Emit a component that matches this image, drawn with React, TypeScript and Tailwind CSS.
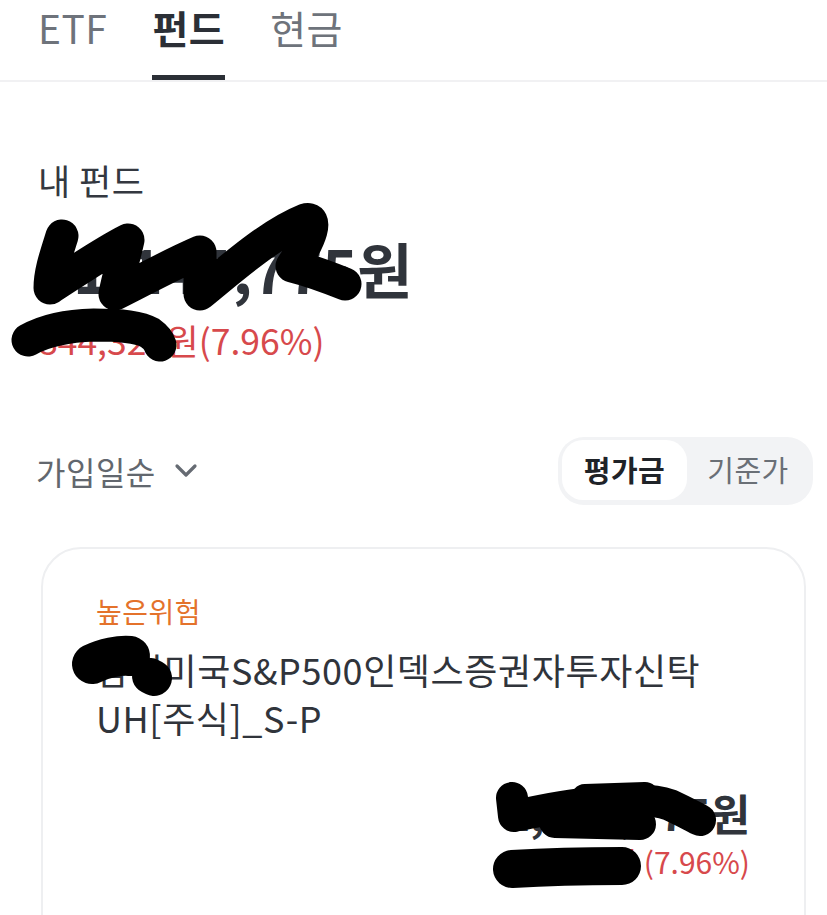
import React from "react";

const font = { fontFamily: '"Noto Sans CJK KR", "Noto Sans", sans-serif' };

function Scribbles() {
  return (
    <svg
      className="pointer-events-none absolute left-0 top-0"
      width={827}
      height={915}
      viewBox="0 0 827 915"
      fill="none"
      stroke="#000"
      strokeLinecap="round"
      strokeLinejoin="round"
    >
      <path
        d="M62 236 C56 255 50 272 50 288 C78 270 104 252 128 240 C124 258 118 278 115 294 C143 280 172 264 200 252 C200 268 200 282 200 294 C232 268 270 234 305 220 C318 216 312 238 292 266 C308 270 330 278 345 284"
        strokeWidth={33}
      />
      <path d="M28 340 C46 330 66 326 94 325 C122 325 140 327 150 333 C157 338 159 342 160 345" strokeWidth={33} />
      <path d="M92 664 C104 658 120 655 130 656" strokeWidth={40} />
      <path d="M150 676 L154 678" strokeWidth={36} />
      <path d="M512 798 L514 816 C545 810 572 804 600 802 C625 800 650 798 670 805 C685 812 694 817 700 820" strokeWidth={32} />
      <path d="M555 822 L640 824" strokeWidth={32} />
      <path d="M585 798 L645 796" strokeWidth={28} />
      <path d="M512 869 C545 867 585 866 622 866" strokeWidth={38} />
    </svg>
  );
}

export default function App() {
  return (
    <div className="relative h-[915px] w-full overflow-hidden bg-white" style={font}>
      {/* Tabs */}
      <div className="flex h-[82px] items-start gap-[45px] border-b-2 border-[#f1f1f3] pl-[38px]">
        <div className="flex h-[82px] flex-col">
          <span className="pt-[4px] text-[39px] leading-[46px] tracking-[0.5px] text-[#6e737b]">ETF</span>
        </div>
        <div className="flex h-[82px] flex-col">
          <span className="pt-[4px] text-[39px] font-bold leading-[46px] tracking-[0.5px] text-[#2b2f36]">펀드</span>
          <div className="mt-[25px] h-[5px] w-full bg-[#2b2f36]" />
        </div>
        <div className="flex h-[82px] flex-col">
          <span className="pt-[4px] text-[39px] leading-[46px] tracking-[0.5px] text-[#6e737b]">현금</span>
        </div>
      </div>

      {/* Summary */}
      <div className="pl-[38px]">
        <div className="mt-[76px] text-[35px] leading-[44px] tracking-[0.5px] text-[#343840]">내 펀드</div>
        <div className="mt-[30px] text-[60px] font-bold leading-[72px] tracking-[-0.3px] text-[#30343b]">
          11,144,775원
        </div>
        <div className="mt-[14px] text-[35.5px] leading-[44px] text-[#d7494c]">844,327원(7.96%)</div>
      </div>

      {/* Sort row */}
      <div className="mt-[75px] flex items-center justify-between pl-[36px] pr-[14px]">
        <div className="flex items-center gap-[18px] text-[32px] leading-[40px] tracking-[0.5px] text-[#62676e]">
          <span>가입일순</span>
          <svg width="24" height="16" viewBox="0 0 24 16" fill="none">
            <path d="M3 3 L12 12 L21 3" stroke="#666b73" strokeWidth="3.2" strokeLinecap="round" strokeLinejoin="round" />
          </svg>
        </div>
        <div className="flex h-[68px] w-[255px] rounded-[26px] bg-[#f2f3f5] p-[4px] pb-[5px] pt-[3px]">
          <div className="flex h-[60px] w-[125px] items-center justify-center rounded-[21px] bg-white text-[29px] font-bold tracking-[0.5px] text-[#1f2328]">
            평가금
          </div>
          <div className="flex h-[60px] flex-1 items-center justify-center text-[29px] tracking-[0.5px] text-[#6a6f76]">기준가</div>
        </div>
      </div>

      {/* Card */}
      <div className="ml-[41px] mr-[21px] mt-[42px] h-[420px] rounded-[40px] border-2 border-[#eeeff1] bg-white pl-[53px] pr-[54px] pt-[44px]">
        <div className="text-[28px] leading-[36px] tracking-[0.5px] text-[#e4722b]">높은위험</div>
        <div className="mt-[16px] text-[36px] leading-[48px] tracking-[0.6px] text-[#30343b]">
          삼성미국S&amp;P500인덱스증권자투자신탁
          <br />
          UH[주식]_S-P
        </div>
        <div className="mt-[43px] text-right text-[43px] font-bold leading-[56px] text-[#30343b]">1,144,775원</div>
        <div className="mt-[1px] text-right text-[30px] leading-[40px] text-[#d7494c]">844,327원 (7.96%)</div>
      </div>

      <Scribbles />
    </div>
  );
}
